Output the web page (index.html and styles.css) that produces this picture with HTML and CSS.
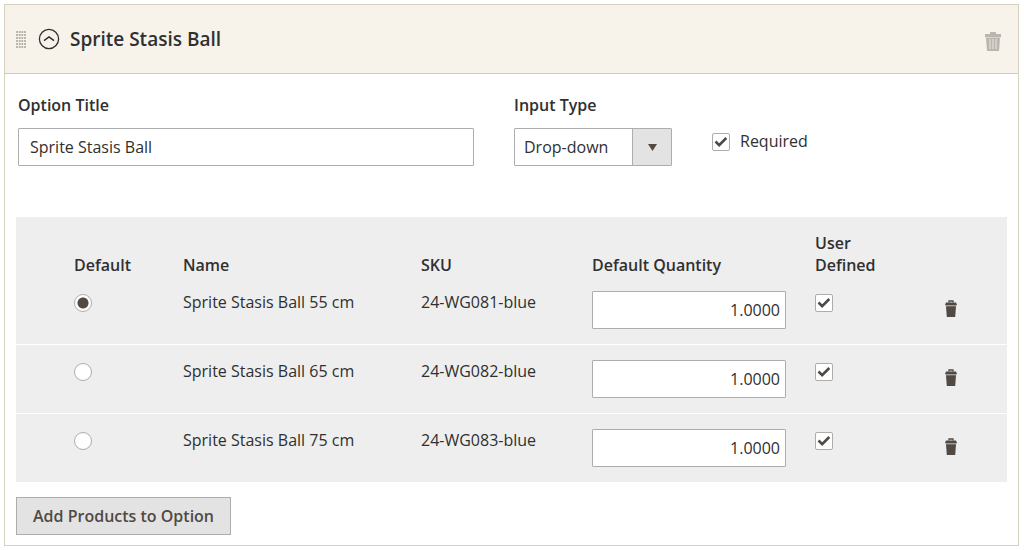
FILE: index.html
```html
<!DOCTYPE html>
<html lang="en">
<head>
    <meta charset="UTF-8">
    <meta name="viewport" content="width=device-width, initial-scale=1.0">
    <title>Bundle Option</title>
    <link rel="stylesheet" href="styles.css">
</head>
<body>

    <svg class="sprites" aria-hidden="true">
        <symbol id="trash" viewBox="0 0 12 17">
            <path d="M4 2.5V1h4v1.5" fill="none" stroke="currentColor" stroke-width="1.3"/>
            <path d="M1 2.5h10l1 2.5H0z" fill="currentColor"/>
            <path d="M0.5 5h11v1.3H0.5z" fill="currentColor" opacity="0.5"/>
            <path d="M1 6.3h10L10.200 17H1.800z" fill="currentColor"/>
        </symbol>
    </svg>

    <form class="option">
        <div class="option-header">
            <svg class="drag" width="10" height="17" viewBox="0 0 10 17" aria-hidden="true">
                <path d="M1 0V17M3.7 0V17M6.3 0V17M9 0V17" stroke="#b3b0aa" stroke-width="1.8" stroke-dasharray="2 1"/>
            </svg>
            <button type="button" class="icon-button" aria-label="Collapse">
                <svg width="22" height="22" viewBox="0 0 22 22" fill="none" stroke="#303030">
                    <circle cx="11" cy="11" r="9.6" stroke-width="1.3"/>
                    <path d="M6 12.700L11 9l5 3.700" stroke-width="1.5"/>
                </svg>
            </button>
            <h2>Sprite Stasis Ball</h2>
            <button type="button" class="icon-button delete-option" aria-label="Delete option">
                <svg width="16" height="19" viewBox="0 0 16 19" fill="#b9b5af">
                    <path d="M5 0h6v2H5zM0 2h16v3H0z"/>
                    <path d="M0.5 5h15v1H0.500z" opacity="0.5"/>
                    <path d="M1 6h14l-1 13H2z"/>
                    <path d="M5 7v10M8 7v10M11 7v10" stroke="#e4e0da" stroke-width="1.2"/>
                </svg>
            </button>
        </div>

        <div class="option-body">
            <div class="fields">
                <div class="field field-title">
                    <label for="optionTitle">Option Title</label>
                    <input type="text" id="optionTitle" name="optionTitle" value="Sprite Stasis Ball">
                </div>
                <div class="field field-type">
                    <label for="inputType">Input Type</label>
                    <select id="inputType" name="inputType">
                        <option>Drop-down</option>
                        <option>Radio Buttons</option>
                        <option>Checkbox</option>
                        <option>Multiple Select</option>
                    </select>
                </div>
                <div class="field-required">
                    <input type="checkbox" id="required" name="required" checked>
                    <label for="required">Required</label>
                </div>
            </div>

            <table class="products">
                <colgroup>
                    <col class="col-drag">
                    <col class="col-default">
                    <col class="col-name">
                    <col class="col-sku">
                    <col class="col-qty">
                    <col class="col-user">
                    <col class="col-actions">
                </colgroup>
                <thead>
                    <tr>
                        <th></th>
                        <th>Default</th>
                        <th>Name</th>
                        <th>SKU</th>
                        <th>Default Quantity</th>
                        <th>User<br>Defined</th>
                        <th></th>
                    </tr>
                </thead>
                <tbody>
                    <tr>
                        <td></td>
                        <td><input type="radio" name="default" aria-label="Default 55 cm" checked></td>
                        <td>Sprite Stasis Ball 55 cm</td>
                        <td>24-WG081-blue</td>
                        <td><input type="text" class="qty" aria-label="Quantity 55 cm" value="1.0000"></td>
                        <td><input type="checkbox" aria-label="User defined 55 cm" checked></td>
                        <td><button type="button" class="icon-button delete-row" aria-label="Delete 55 cm"><svg width="12" height="17"><use href="#trash"/></svg></button></td>
                    </tr>
                    <tr>
                        <td></td>
                        <td><input type="radio" name="default" aria-label="Default 65 cm"></td>
                        <td>Sprite Stasis Ball 65 cm</td>
                        <td>24-WG082-blue</td>
                        <td><input type="text" class="qty" aria-label="Quantity 65 cm" value="1.0000"></td>
                        <td><input type="checkbox" aria-label="User defined 65 cm" checked></td>
                        <td><button type="button" class="icon-button delete-row" aria-label="Delete 65 cm"><svg width="12" height="17"><use href="#trash"/></svg></button></td>
                    </tr>
                    <tr>
                        <td></td>
                        <td><input type="radio" name="default" aria-label="Default 75 cm"></td>
                        <td>Sprite Stasis Ball 75 cm</td>
                        <td>24-WG083-blue</td>
                        <td><input type="text" class="qty" aria-label="Quantity 75 cm" value="1.0000"></td>
                        <td><input type="checkbox" aria-label="User defined 75 cm" checked></td>
                        <td><button type="button" class="icon-button delete-row" aria-label="Delete 75 cm"><svg width="12" height="17"><use href="#trash"/></svg></button></td>
                    </tr>
                </tbody>
            </table>

            <button type="button" class="add-button">Add Products to Option</button>
        </div>
    </form>

</body>
</html>
```
FILE: styles.css
```css
* {
    box-sizing: border-box;
}

body {
    margin: 4px 5px 4px 4px;
    background-color: #fff;
    color: #303030;
    font-family: "Open Sans", sans-serif;
    font-size: 16px;
    line-height: 22px;
}

input, select, button {
    font: inherit;
    color: inherit;
}

.sprites {
    display: none;
}

.option {
    border: 1px solid #d6d2c2;
    box-shadow: 0 0 0 1px #ece9df;
}

.option-header {
    display: flex;
    align-items: center;
    height: 69px;
    padding: 0 17px 0 11px;
    background-color: #f7f3eb;
    border-bottom: 1px solid #cccac2;
}

.option-header h2 {
    flex: 1;
    margin: 0 0 0 10px;
    font-size: 19px;
    font-weight: 600;
}

.drag {
    margin-right: 12px;
}

.icon-button {
    display: block;
    padding: 0;
    border: none;
    background: none;
    cursor: pointer;
}

.icon-button svg {
    display: block;
}

.delete-option {
    margin-top: 4px;
}

.option-body {
    padding: 20px 11px 10px;
}

.fields {
    display: flex;
    gap: 40px;
    padding-left: 2px;
    margin-bottom: 51px;
}

.field label {
    display: block;
    margin-bottom: 12px;
    font-weight: 600;
}

.field-title {
    flex: 1;
}

.field-type {
    width: 158px;
}

.field-required {
    display: flex;
    align-items: flex-start;
    gap: 10px;
    width: 295px;
    padding-top: 36px;
}

input[type="text"], select {
    display: block;
    width: 100%;
    height: 38px;
    padding: 0 11px;
    border: 1px solid #adadad;
    border-radius: 1px;
    background-color: #fff;
}

select {
    appearance: none;
    padding: 0 48px 0 9px;
    background-image:
        url("data:image/svg+xml,%3Csvg xmlns='http://www.w3.org/2000/svg' width='9' height='7'%3E%3Cpath d='M0 0h9L4.5 7z' fill='%23514943'/%3E%3C/svg%3E"),
        linear-gradient(#e3e3e3, #e3e3e3),
        linear-gradient(#adadad, #adadad);
    background-repeat: no-repeat;
    background-position: right 14px center, right center, right center;
    background-size: 9px 7px, 38px 100%, 39px 100%;
}

input[type="checkbox"], input[type="radio"] {
    appearance: none;
    display: block;
    width: 18px;
    height: 18px;
    margin: 3px 0 0;
    border: 1px solid #adadad;
    border-radius: 2px;
    background: #fff center no-repeat;
}

input[type="checkbox"]:checked {
    background-image: url("data:image/svg+xml,%3Csvg xmlns='http://www.w3.org/2000/svg' width='14' height='12'%3E%3Cpath d='M1.500 5.500L5.200 9.200L12.300 2' fill='none' stroke='%23514943' stroke-width='2.600'/%3E%3C/svg%3E");
}

input[type="radio"] {
    border-radius: 50%;
}

input[type="radio"]:checked {
    background-image: radial-gradient(circle, #514943 5px, transparent 6px);
}

.products {
    width: 100%;
    table-layout: fixed;
    border-collapse: separate;
    border-spacing: 0;
    margin-bottom: 15px;
    background-color: #eee;
}

.col-drag { width: 43px; }
.col-default { width: 109px; }
.col-sku { width: 171px; }
.col-qty { width: 223px; }
.col-user { width: 130px; }
.col-actions { width: 77px; }

.products th {
    padding: 15px 14px 0 15px;
    font-weight: 600;
    text-align: left;
    vertical-align: bottom;
}

.products td {
    padding: 15px 14px 15px 15px;
    vertical-align: top;
}

.products tbody tr + tr td {
    border-top: 1px solid #fff;
}

.products .qty {
    padding: 0 5px;
    text-align: right;
}

.delete-row {
    margin-top: 9px;
    color: #514943;
}

.add-button {
    display: block;
    height: 38px;
    padding: 0 16px;
    border: 1px solid #adadad;
    background-color: #e3e3e3;
    color: #514943;
    font-weight: 600;
    cursor: pointer;
}
```
